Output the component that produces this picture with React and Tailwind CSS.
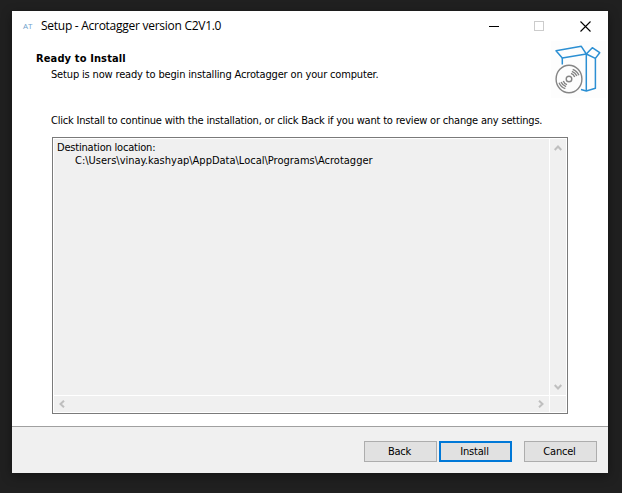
const ui = "font-['DejaVu_Sans_Condensed','DejaVu_Sans',sans-serif] [font-stretch:condensed] text-[11px] leading-[13px] whitespace-pre";

function Chevron({ d }) {
  return (
    <svg viewBox="0 0 8 8" className="block size-2" fill="none" stroke="#bfbfbf" strokeWidth="2">
      <path d={d} />
    </svg>
  );
}

function TitleBar() {
  return (
    <header className="flex h-[30px] items-center pl-[11px] pr-[17px]">
      <span className="w-[18px] font-['Open_Sans',sans-serif] text-[8px] leading-none text-[#6f9fcc]">AT</span>
      <h1 className="font-['Open_Sans',sans-serif] text-[12px] leading-4 tracking-[-0.27px] whitespace-pre text-black">
        <span>Setup - Acrotagger version C2V1.0</span>
      </h1>
      <div className="ml-auto flex items-center gap-[35px]">
        <svg className="block h-[11px] w-[10px]" viewBox="0 0 10 11" shapeRendering="crispEdges">
          <path d="M0 5.5H10" stroke="#000" />
        </svg>
        <svg className="block h-[11px] w-[10px]" viewBox="0 0 10 11" shapeRendering="crispEdges">
          <rect x=".5" y=".5" width="9" height="9" fill="none" stroke="#ccc" />
        </svg>
        <svg className="ml-px block h-[11px] w-[11px]" viewBox="0 0 11 11">
          <path d="M.5 .5L10.5 10.5M10.5 .5L.5 10.5" stroke="#000" strokeWidth="1.1" />
        </svg>
      </div>
    </header>
  );
}

function SetupLogo() {
  return (
    <svg className="block h-[57px] w-[55px] bg-[#fdfdfd]" viewBox="0 0 55 57" fill="none">
      <g stroke="#2b8fd3" strokeWidth="1.5" strokeLinejoin="round">
        <path d="M5 9.7L30.3 5.3L35.3 13L11.3 17Z" />
        <path d="M35.3 13L41.3 6.7L48.7 11.7L44.4 17.4Z" />
        <path d="M11.3 17V23.5M35.3 13V50L44.4 47.3V17.4M35.3 50L30 48.5" />
      </g>
      <g stroke="#858585" strokeWidth="1.4">
        <ellipse cx="18" cy="38" rx="12.9" ry="13.7" />
        <circle cx="18" cy="38" r="2.8" />
        <path d="M20 32.3A6 6 0 0 1 23.7 36M20.9 30.3A8.3 8.3 0 0 1 25.9 35.1M21.7 28.3A10.4 10.4 0 0 1 27.9 34.3" />
        <path d="M16 43.7A6 6 0 0 1 12.3 40M15.1 45.7A8.3 8.3 0 0 1 10.1 40.9M14.3 47.7A10.4 10.4 0 0 1 8.1 41.7" />
      </g>
    </svg>
  );
}

function Button({ children, className = "border border-[#adadad]" }) {
  return (
    <button className={`flex h-[21px] w-[73px] items-center justify-center bg-[#e1e1e1] pr-[2px] tracking-[-0.2px] ${ui} ${className}`}>
      <span>{children}</span>
    </button>
  );
}

export default function App() {
  return (
    <div className="h-[493px] w-[622px] overflow-hidden bg-[#202020] pl-3 pt-[11px] text-black">
      <main className="flex h-[462px] w-[596px] flex-col bg-white shadow-[0_3px_10px_#0006]">
        <TitleBar />
        <section className="flex h-[73px] justify-between pl-6 pr-[2px]">
          <div className="pt-[11px]">
            <h2 className={`${ui} font-bold tracking-[0.13px]`}><span>Ready to Install</span></h2>
            <p className={`${ui} pl-[15px] pt-[3px] tracking-[-0.16px]`}><span>Setup is now ready to begin installing Acrotagger on your computer.</span></p>
          </div>
          <SetupLogo />
        </section>
        <section className="flex-1 pl-10">
          <p className={`${ui} -ml-px tracking-[-0.2px]`}><span>Click Install to continue with the installation, or click Back if you want to review or change any settings.</span></p>
          <div className="mt-[10px] h-[277px] w-[516px] border border-[#7a7a7a] bg-white p-px">
            <div className="grid h-full grid-cols-[495px_1fr] grid-rows-[256px_1fr] gap-px">
              <div className={`bg-[#f0f0f0] pl-[3px] pt-[2px] ${ui}`}>
                <p className="tracking-[-0.2px]"><span>Destination location:</span></p>
                <p className="pl-[18px]"><span>C:\Users\vinay.kashyap\AppData\Local\Programs\Acrotagger</span></p>
              </div>
              <div className="flex flex-col items-center justify-between bg-[#f0f0f0] pb-1 pt-[5px]">
                <Chevron d="M.7 6L4 2.5L7.3 6" />
                <Chevron d="M.7 2L4 5.5L7.3 2" />
              </div>
              <div className="flex items-center justify-between bg-[#f0f0f0] px-1">
                <Chevron d="M6 .7L2.5 4L6 7.3" />
                <Chevron d="M2 .7L5.5 4L2 7.3" />
              </div>
              <div className="bg-[#f0f0f0]" />
            </div>
          </div>
        </section>
        <footer className="flex h-[47px] justify-end border-t border-[#a0a0a0] bg-[#f0f0f0] pr-[11px] pt-[14px]">
          <Button>Back</Button>
          <div className="ml-[2px] mr-3">
            <Button className="border-2 border-[#0078d7]">Install</Button>
          </div>
          <Button>Cancel</Button>
        </footer>
      </main>
    </div>
  );
}
